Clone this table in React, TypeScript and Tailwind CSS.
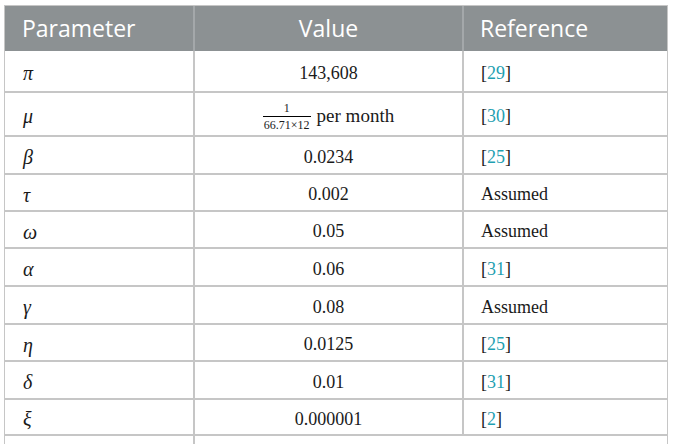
import React from "react";

const serif = { fontFamily: '"Liberation Serif", "DejaVu Serif", serif' };

type Row = { p: string; v: React.ReactNode; r: React.ReactNode; h: string };

const Ref = ({ n }: { n: string }) => (
  <span>
    [<span className="text-[#1f9fb2]">{n}</span>]
  </span>
);

const rows: Row[] = [
  { p: "π", v: "143,608", r: <Ref n="29" />, h: "h-[42px]" },
  {
    p: "μ",
    v: (
      <span className="inline-flex items-center gap-[6px]">
        <span className="inline-flex flex-col items-center leading-none text-[12px]">
          <span className="pb-[2px]">1</span>
          <span className="border-t border-black pt-[2px] px-[1px]">66.71×12</span>
        </span>
        <span className="text-[19px]">per month</span>
      </span>
    ),
    r: <Ref n="30" />,
    h: "h-[44px]",
  },
  { p: "β", v: "0.0234", r: <Ref n="25" />, h: "h-[38px]" },
  { p: "τ", v: "0.002", r: "Assumed", h: "h-[37px]" },
  { p: "ω", v: "0.05", r: "Assumed", h: "h-[37px]" },
  { p: "α", v: "0.06", r: <Ref n="31" />, h: "h-[38px]" },
  { p: "γ", v: "0.08", r: "Assumed", h: "h-[38px]" },
  { p: "η", v: "0.0125", r: <Ref n="25" />, h: "h-[37px]" },
  { p: "δ", v: "0.01", r: <Ref n="31" />, h: "h-[38px]" },
  { p: "ξ", v: "0.000001", r: <Ref n="2" />, h: "h-[36px]" },
];

export default function App() {
  return (
    <div className="w-[673px] h-[446px] bg-white overflow-hidden pt-[5px] pl-[4px]">
      <div className="w-[664px] border border-[#c6c6c6] border-b-0">
        <div
          className="grid grid-cols-[190px_269px_1fr] h-[45px] bg-[#8c9193] text-white text-[23px]"
          style={{ fontFamily: '"Open Sans", "Noto Sans", sans-serif' }}
        >
          <div className="flex items-center pl-[17px] border-r-2 border-[#a4a8aa]">Parameter</div>
          <div className="flex items-center justify-center border-r-2 border-[#a4a8aa]">Value</div>
          <div className="flex items-center pl-[16px]">Reference</div>
        </div>
        {rows.map((row, i) => (
          <div
            key={i}
            className={`grid grid-cols-[190px_269px_1fr] ${row.h} border-b-2 border-[#c6c6c6] text-[18px] text-[#1a1a1a]`}
            style={serif}
          >
            <div className="flex items-center pl-[18px] pt-[4px] border-r-2 border-[#c6c6c6] italic text-[20px]">
              {row.p}
            </div>
            <div className="flex items-center justify-center pt-[4px] border-r-2 border-[#c6c6c6]">
              {row.v}
            </div>
            <div className="flex items-center pl-[17px] pt-[4px]">{row.r}</div>
          </div>
        ))}
        <div className="grid grid-cols-[190px_269px_1fr] h-[8px]">
          <div className="border-r-2 border-[#c6c6c6]" />
          <div />
          <div />
        </div>
      </div>
    </div>
  );
}
